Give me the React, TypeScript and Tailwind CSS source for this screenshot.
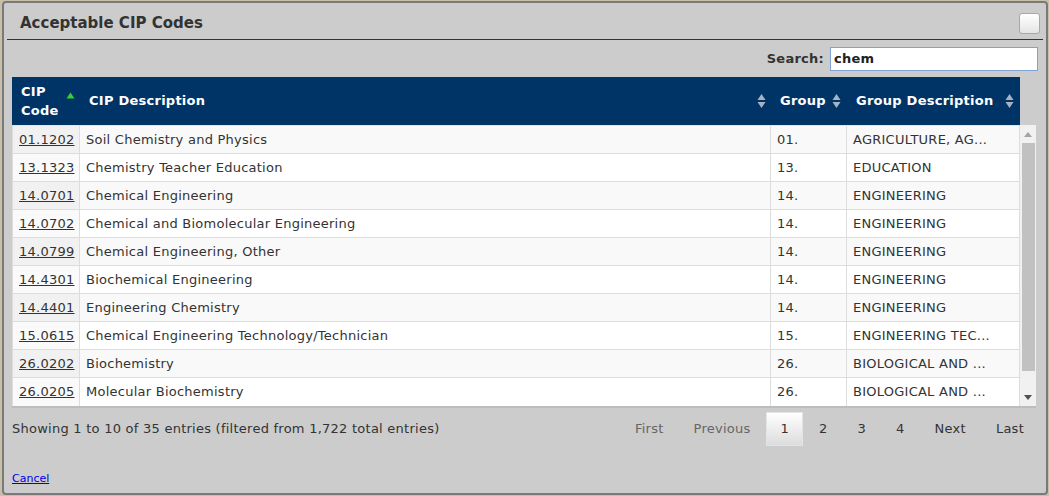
import React from "react";

type Row = { code: string; desc: string; group: string; groupDesc: string };

const rows: Row[] = [
  { code: "01.1202", desc: "Soil Chemistry and Physics", group: "01.", groupDesc: "AGRICULTURE, AG..." },
  { code: "13.1323", desc: "Chemistry Teacher Education", group: "13.", groupDesc: "EDUCATION" },
  { code: "14.0701", desc: "Chemical Engineering", group: "14.", groupDesc: "ENGINEERING" },
  { code: "14.0702", desc: "Chemical and Biomolecular Engineering", group: "14.", groupDesc: "ENGINEERING" },
  { code: "14.0799", desc: "Chemical Engineering, Other", group: "14.", groupDesc: "ENGINEERING" },
  { code: "14.4301", desc: "Biochemical Engineering", group: "14.", groupDesc: "ENGINEERING" },
  { code: "14.4401", desc: "Engineering Chemistry", group: "14.", groupDesc: "ENGINEERING" },
  { code: "15.0615", desc: "Chemical Engineering Technology/Technician", group: "15.", groupDesc: "ENGINEERING TEC..." },
  { code: "26.0202", desc: "Biochemistry", group: "26.", groupDesc: "BIOLOGICAL AND ..." },
  { code: "26.0205", desc: "Molecular Biochemistry", group: "26.", groupDesc: "BIOLOGICAL AND ..." },
];

function SortBoth() {
  return (
    <svg width="9" height="16" viewBox="0 0 9 16" className="shrink-0">
      <path d="M4.5 1 L8.5 7 L0.5 7 Z" fill="#a7b3c4" />
      <path d="M4.5 15 L8.5 9 L0.5 9 Z" fill="#a7b3c4" />
    </svg>
  );
}

function SortAsc() {
  return (
    <svg width="9" height="7" viewBox="0 0 9 7" className="shrink-0">
      <path d="M4.5 0.5 L8.5 6.5 L0.5 6.5 Z" fill="#2fd62f" />
    </svg>
  );
}

export default function App() {
  const font = { fontFamily: '"DejaVu Sans", Verdana, sans-serif' };
  return (
    <div className="w-[1049px] h-[496px] bg-[#c8bfa8] overflow-hidden tracking-[0.25px]" style={font}>
      <div className="ml-[2px] mt-[1px] w-[1046px] h-[494px] bg-[#cccccc] border-2 border-[#7a7a7a] rounded-[4px] flex flex-col">
        {/* title bar */}
        <div className="mx-[3px] h-[37px] border-b border-[#333] flex items-center justify-between pl-[13px] pr-[3px] pt-[4px]">
          <span className="text-[15px] font-bold text-[#333] tracking-normal">Acceptable CIP Codes</span>
          <button className="w-[21px] h-[21px] rounded-[3px] border border-[#a8a8a8] bg-gradient-to-b from-white to-[#e4e4e4]" />
        </div>

        {/* content */}
        <div className="pl-[8px] pr-[6px] flex flex-col">
          <div className="h-[37px] flex items-center justify-end gap-[6px] pt-[1px] pr-[2px]">
            <span className="text-[13px] font-bold text-[#333]">Search:</span>
            <div className="w-[208px] h-[24px] bg-white border border-[#7fa3d6] flex items-center px-[3px] text-[13px] font-bold text-[#222]">
              chem
            </div>
          </div>

          {/* table */}
          <div className="w-[1024px]">
            <div className="w-[1008px] h-[48px] bg-[#003366] grid grid-cols-[68px_691px_76px_173px] text-white text-[13px] font-bold">
              <div className="flex items-center justify-between pl-[9px] pr-[5px] leading-[19px]">
                <span>CIP<br />Code</span>
                <span className="self-start mt-[15px]"><SortAsc /></span>
              </div>
              <div className="flex items-center justify-between pl-[9px] pr-[5px]">
                <span>CIP Description</span>
                <SortBoth />
              </div>
              <div className="flex items-center justify-between pl-[9px] pr-[6px]">
                <span>Group</span>
                <SortBoth />
              </div>
              <div className="flex items-center justify-between pl-[9px] pr-[6px]">
                <span>Group Description</span>
                <SortBoth />
              </div>
            </div>

            <div className="flex border-b-2 border-[#bdbdbd] bg-white">
              <div className="w-[1008px] border-t border-[#e6e6e6]">
                {rows.map((r, i) => {
                  const odd = i % 2 === 0;
                  return (
                    <div
                      key={r.code}
                      className={`grid grid-cols-[68px_691px_76px_173px] h-[28px] text-[13px] text-[#333] border-b border-[#dddddd] last:border-b-0 ${odd ? "bg-[#f9f9f9]" : "bg-white"}`}
                    >
                      <div className={`flex items-center pl-[6px] border-l border-r border-[#dddddd] ${odd ? "bg-[#f1f1f1]" : "bg-[#fafafa]"}`}>
                        <span className="underline">{r.code}</span>
                      </div>
                      <div className="flex items-center pl-[6px] border-r border-[#dddddd]">{r.desc}</div>
                      <div className="flex items-center pl-[6px] border-r border-[#dddddd]">{r.group}</div>
                      <div className="flex items-center pl-[6px] border-r border-[#dddddd]">{r.groupDesc}</div>
                    </div>
                  );
                })}
              </div>
              {/* scrollbar */}
              <div className="w-[16px] bg-[#f1f1f1] flex flex-col items-center">
                <div className="h-[18px] flex items-center justify-center">
                  <svg width="8" height="5" viewBox="0 0 8 5"><path d="M4 0 L8 5 L0 5 Z" fill="#a3a3a3" /></svg>
                </div>
                <div className="w-[13px] h-[228px] bg-[#c1c1c1]" />
                <div className="flex-1 flex items-end justify-center pb-[6px]">
                  <svg width="8" height="5" viewBox="0 0 8 5"><path d="M0 0 L8 0 L4 5 Z" fill="#505050" /></svg>
                </div>
              </div>
            </div>
          </div>

          {/* footer */}
          <div className="flex items-center justify-between pt-[4px] w-[1026px]">
            <div className="text-[13px] text-[#333]">
              Showing 1 to 10 of 35 entries (filtered from 1,722 total entries)
            </div>
            <div className="flex items-center gap-[2px] text-[13px]">
              <span className="px-[13px] py-[6px] border border-transparent text-[#666]">First</span>
              <span className="px-[13px] py-[6px] border border-transparent text-[#666]">Previous</span>
              <span className="px-[13px] py-[6px] border border-[#e4e4e4] text-[#333] bg-gradient-to-b from-white to-[#dcdcdc]">1</span>
              <span className="px-[13px] py-[6px] border border-transparent text-[#333]">2</span>
              <span className="px-[13px] py-[6px] border border-transparent text-[#333]">3</span>
              <span className="px-[13px] py-[6px] border border-transparent text-[#333]">4</span>
              <span className="px-[13px] py-[6px] border border-transparent text-[#333]">Next</span>
              <span className="px-[13px] py-[6px] border border-transparent text-[#333]">Last</span>
            </div>
          </div>

          <div className="mt-[24px] leading-[14px]">
            <a href="#" className="text-[11px] text-[#0000ee] underline tracking-normal">Cancel</a>
          </div>
        </div>
      </div>
    </div>
  );
}
